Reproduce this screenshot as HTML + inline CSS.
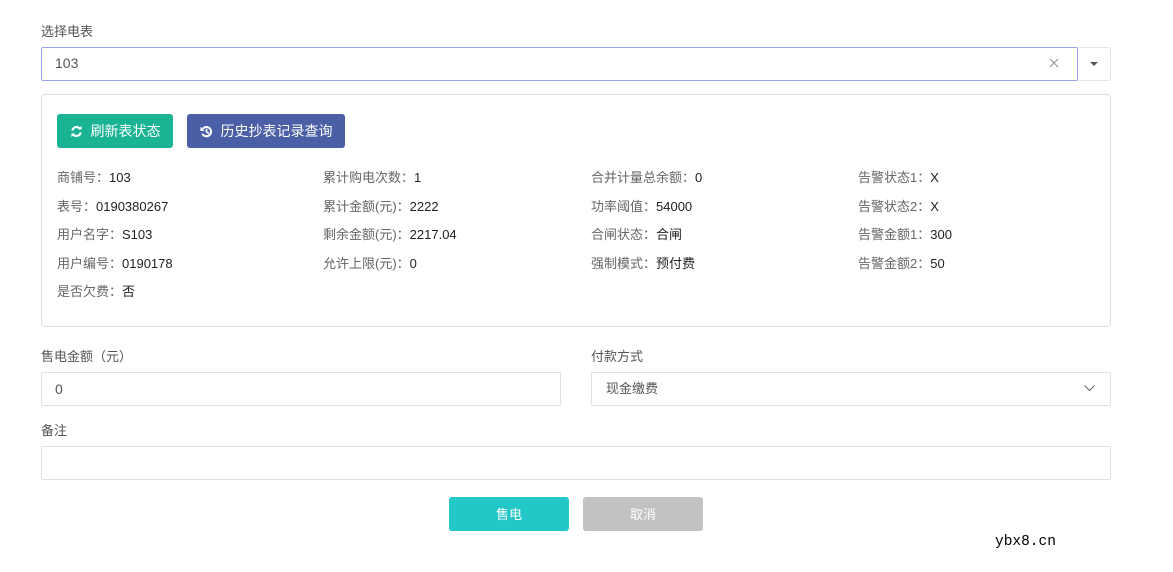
<!DOCTYPE html>
<html><head><meta charset="utf-8"><style>
*{box-sizing:border-box;margin:0;padding:0}
body{width:1173px;height:572px;background:#fff;font-family:"Liberation Sans","Noto Sans CJK SC",sans-serif;font-size:13px;color:#606266;position:relative;overflow:hidden}
.a{position:absolute}
.lbl{font-size:13px;color:#555;line-height:16px}
.box{border:1px solid #e0e0e0;border-radius:2px;background:#fff}
.btn{border-radius:3px;color:#fff;font-size:14px;display:flex;align-items:center;justify-content:center}
.r{position:absolute;font-size:13px;line-height:16px;color:#666;white-space:nowrap}
.r b{font-weight:normal;color:#222}
</style></head><body>
<div class="a lbl" style="left:41px;top:24px">选择电表</div>
<div class="a" style="left:41px;top:47px;width:1037px;height:34px;border:1px solid #9aa4ee;border-radius:2px 0 0 2px"></div>
<div class="a" style="left:55px;top:55px;font-size:14px;color:#555;line-height:17px">103</div>
<svg class="a" style="left:1049px;top:58px" width="10" height="10"><path d="M1 1L9 9M9 1L1 9" stroke="#999" stroke-width="1.2"/></svg>
<div class="a" style="left:1077px;top:47px;width:34px;height:34px;border:1px solid #e5e5e5;border-left:none;border-radius:0 3px 3px 0"></div>
<svg class="a" style="left:1090px;top:62px" width="8" height="5"><path d="M0 0H8L4 4Z" fill="#555"/></svg>

<div class="a" style="left:41px;top:94px;width:1070px;height:233px;border:1px solid #ddd;border-radius:4px"></div>
<div class="a btn" style="left:57px;top:114px;width:116px;height:34px;background:#1ab394">
<svg width="13" height="13" viewBox="0 0 14 14" style="margin-right:8px"><path d="M2.5 6A4.6 4.6 0 0 1 11 4.5M11.5 8A4.6 4.6 0 0 1 3 9.5" stroke="#fff" stroke-width="2.2" fill="none"/><path d="M8.5 4.8H12.5V1Z M5.5 9.2H1.5V13Z" fill="#fff"/></svg>刷新表状态</div>
<div class="a btn" style="left:187px;top:114px;width:158px;height:34px;background:#4a5fa5">
<svg width="13" height="13" viewBox="0 0 14 14" style="margin-right:8px"><path d="M3 4A5 5 0 1 1 2.5 9.5" stroke="#fff" stroke-width="2.2" fill="none"/><path d="M0.5 2V6.5H5Z" fill="#fff"/><path d="M7 4V7.5L9.5 9" stroke="#fff" stroke-width="1.8" fill="none"/></svg>历史抄表记录查询</div>

<div class="r" style="left:57px;top:170px">商铺号：<b>103</b></div>
<div class="r" style="left:57px;top:199px">表号：<b>0190380267</b></div>
<div class="r" style="left:57px;top:227px">用户名字：<b>S103</b></div>
<div class="r" style="left:57px;top:256px">用户编号：<b>0190178</b></div>
<div class="r" style="left:57px;top:284px">是否欠费：<b>否</b></div>
<div class="r" style="left:323px;top:170px">累计购电次数：<b>1</b></div>
<div class="r" style="left:323px;top:199px">累计金额(元)：<b>2222</b></div>
<div class="r" style="left:323px;top:227px">剩余金额(元)：<b>2217.04</b></div>
<div class="r" style="left:323px;top:256px">允许上限(元)：<b>0</b></div>
<div class="r" style="left:591px;top:170px">合并计量总余额：<b>0</b></div>
<div class="r" style="left:591px;top:199px">功率阈值：<b>54000</b></div>
<div class="r" style="left:591px;top:227px">合闸状态：<b>合闸</b></div>
<div class="r" style="left:591px;top:256px">强制模式：<b>预付费</b></div>
<div class="r" style="left:858px;top:170px">告警状态1：<b>X</b></div>
<div class="r" style="left:858px;top:199px">告警状态2：<b>X</b></div>
<div class="r" style="left:858px;top:227px">告警金额1：<b>300</b></div>
<div class="r" style="left:858px;top:256px">告警金额2：<b>50</b></div>

<div class="a lbl" style="left:41px;top:349px">售电金额（元）</div>
<div class="a lbl" style="left:591px;top:349px">付款方式</div>
<div class="a box" style="left:41px;top:372px;width:520px;height:34px"></div>
<div class="a" style="left:55px;top:381px;font-size:14px;color:#555;line-height:16px">0</div>
<div class="a box" style="left:591px;top:372px;width:520px;height:34px"></div>
<div class="a" style="left:606px;top:381px;font-size:13px;color:#555;line-height:16px">现金缴费</div>
<svg class="a" style="left:1084px;top:385px" width="11" height="7"><path d="M0.5 0.5L5.5 5.5L10.5 0.5" stroke="#666" fill="none"/></svg>
<div class="a lbl" style="left:41px;top:423px">备注</div>
<div class="a box" style="left:41px;top:446px;width:1070px;height:34px"></div>

<div class="a btn" style="left:449px;top:497px;width:120px;height:34px;background:#22c7c8;font-size:13px;padding-bottom:2px">售电</div>
<div class="a btn" style="left:583px;top:497px;width:120px;height:34px;background:#c2c2c2;font-size:13px;padding-bottom:2px">取消</div>
<div class="a" style="left:995px;top:534px;font-family:'Liberation Mono',monospace;font-size:14.5px;color:#000">ybx8.cn</div>
</body></html>
